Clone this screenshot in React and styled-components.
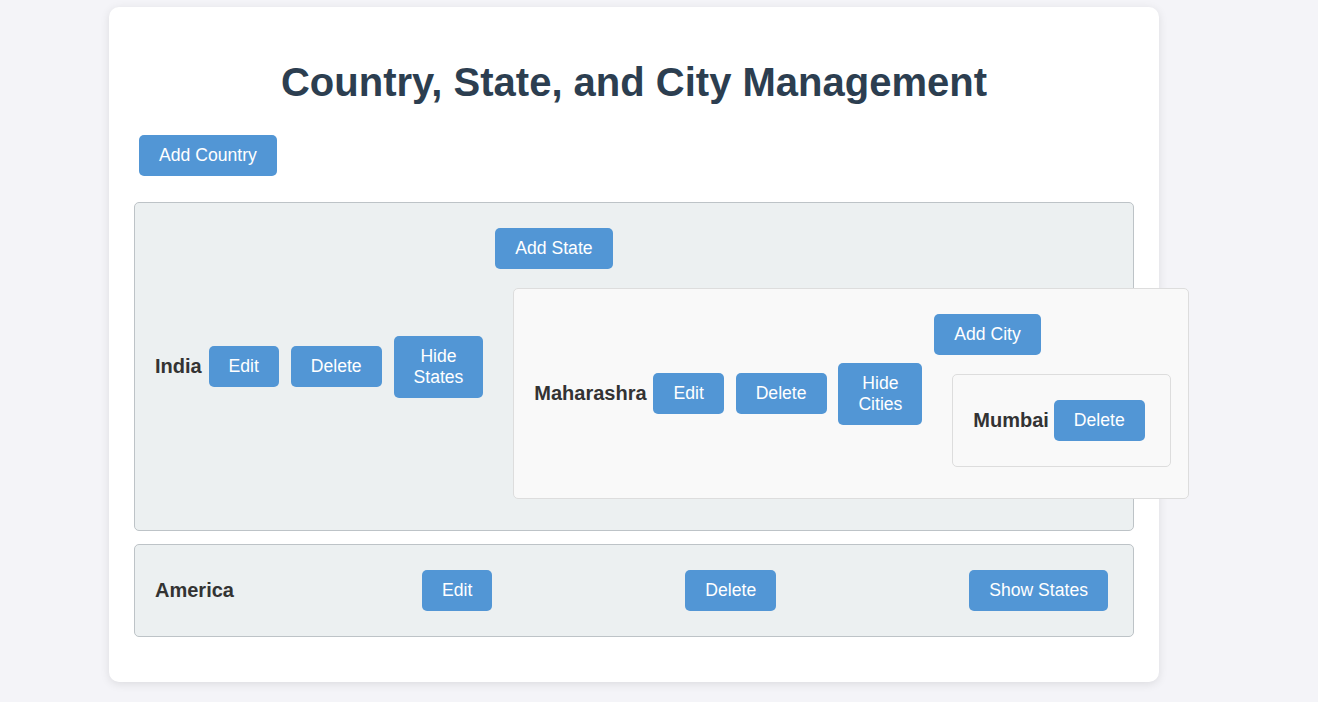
import React, { useState } from "react";
import styled, { createGlobalStyle } from "styled-components";

const GlobalStyle = createGlobalStyle`
  body {
    margin: 0;
    background-color: #f4f4f8;
    font-family: "Liberation Sans", Arial, sans-serif;
  }
`;

const Page = styled.div`
  padding: 7px 0 20px;
`;

const Container = styled.div`
  width: 1050px;
  margin-left: 109px;
  box-sizing: border-box;
  padding: 25px;
  background-color: #fff;
  border-radius: 10px;
  box-shadow: 0 2px 10px rgba(0, 0, 0, 0.1);
`;

const Title = styled.h1`
  margin: 27px 0 25px;
  font-size: 40px;
  line-height: 46px;
  text-align: center;
  color: #2c3e50;
`;

const Toolbar = styled.div`
  display: flex;
  margin-bottom: 21px;
`;

const Button = styled.button`
  flex: none;
  margin: 5px;
  padding: 10px 20px;
  width: ${({ $narrow }) => ($narrow ? "min-content" : "auto")};
  background-color: #5296d5;
  color: #fff;
  border: none;
  border-radius: 5px;
  font-family: inherit;
  font-size: 17.6px;
  line-height: 21px;
  cursor: pointer;
`;

const CountryCard = styled.div`
  display: flex;
  align-items: center;
  justify-content: space-between;
  box-sizing: border-box;
  margin-bottom: ${({ $last }) => ($last ? "20px" : "13px")};
  padding: 20px;
  background-color: #ecf0f1;
  border: 1px solid #bdc3c7;
  border-radius: 5px;
`;

const NestedCard = styled.div`
  display: flex;
  align-items: center;
  justify-content: space-between;
  box-sizing: border-box;
  width: ${({ $width }) => ($width ? `${$width}px` : "max-content")};
  margin: 14px 0 11px 23px;
  padding: 20px;
  background-color: #f9f9f9;
  border: 1px solid #ddd;
  border-radius: 5px;
`;

const Name = styled.span`
  flex: none;
  font-size: 20px;
  font-weight: bold;
  color: #333;
`;

const Children = styled.div`
  display: flex;
  flex-direction: column;
  align-items: flex-start;
  flex: 0 0 ${({ $basis }) => $basis};
  min-width: 0;
`;

const initial = [
  {
    name: "India",
    open: true,
    states: [{ name: "Maharashra", open: true, cities: ["Mumbai"] }],
  },
  { name: "America", open: false, states: [] },
];

export default function App() {
  const [countries, setCountries] = useState(initial);

  const toggleCountry = (i) =>
    setCountries((list) =>
      list.map((c, idx) => (idx === i ? { ...c, open: !c.open } : c))
    );

  return (
    <>
      <GlobalStyle />
      <Page>
        <Container>
          <Title>Country, State, and City Management</Title>
          <Toolbar>
            <Button>Add Country</Button>
          </Toolbar>
          {countries.map((country, i) => (
            <CountryCard key={country.name} $last={i === countries.length - 1}>
              <Name>{country.name}</Name>
              <Button>Edit</Button>
              <Button>Delete</Button>
              <Button $narrow={country.open} onClick={() => toggleCountry(i)}>
                {country.open ? "Hide States" : "Show States"}
              </Button>
              {country.open && (
                <Children $basis="65%">
                  <Button>Add State</Button>
                  {country.states.map((state) => (
                    <NestedCard key={state.name} $width={676}>
                      <Name>{state.name}</Name>
                      <Button>Edit</Button>
                      <Button>Delete</Button>
                      <Button $narrow>{state.open ? "Hide Cities" : "Show Cities"}</Button>
                      {state.open && (
                        <Children $basis="239px">
                          <Button>Add City</Button>
                          {state.cities.map((city) => (
                            <NestedCard key={city}>
                              <Name>{city}</Name>
                              <Button>Delete</Button>
                            </NestedCard>
                          ))}
                        </Children>
                      )}
                    </NestedCard>
                  ))}
                </Children>
              )}
            </CountryCard>
          ))}
        </Container>
      </Page>
    </>
  );
}
